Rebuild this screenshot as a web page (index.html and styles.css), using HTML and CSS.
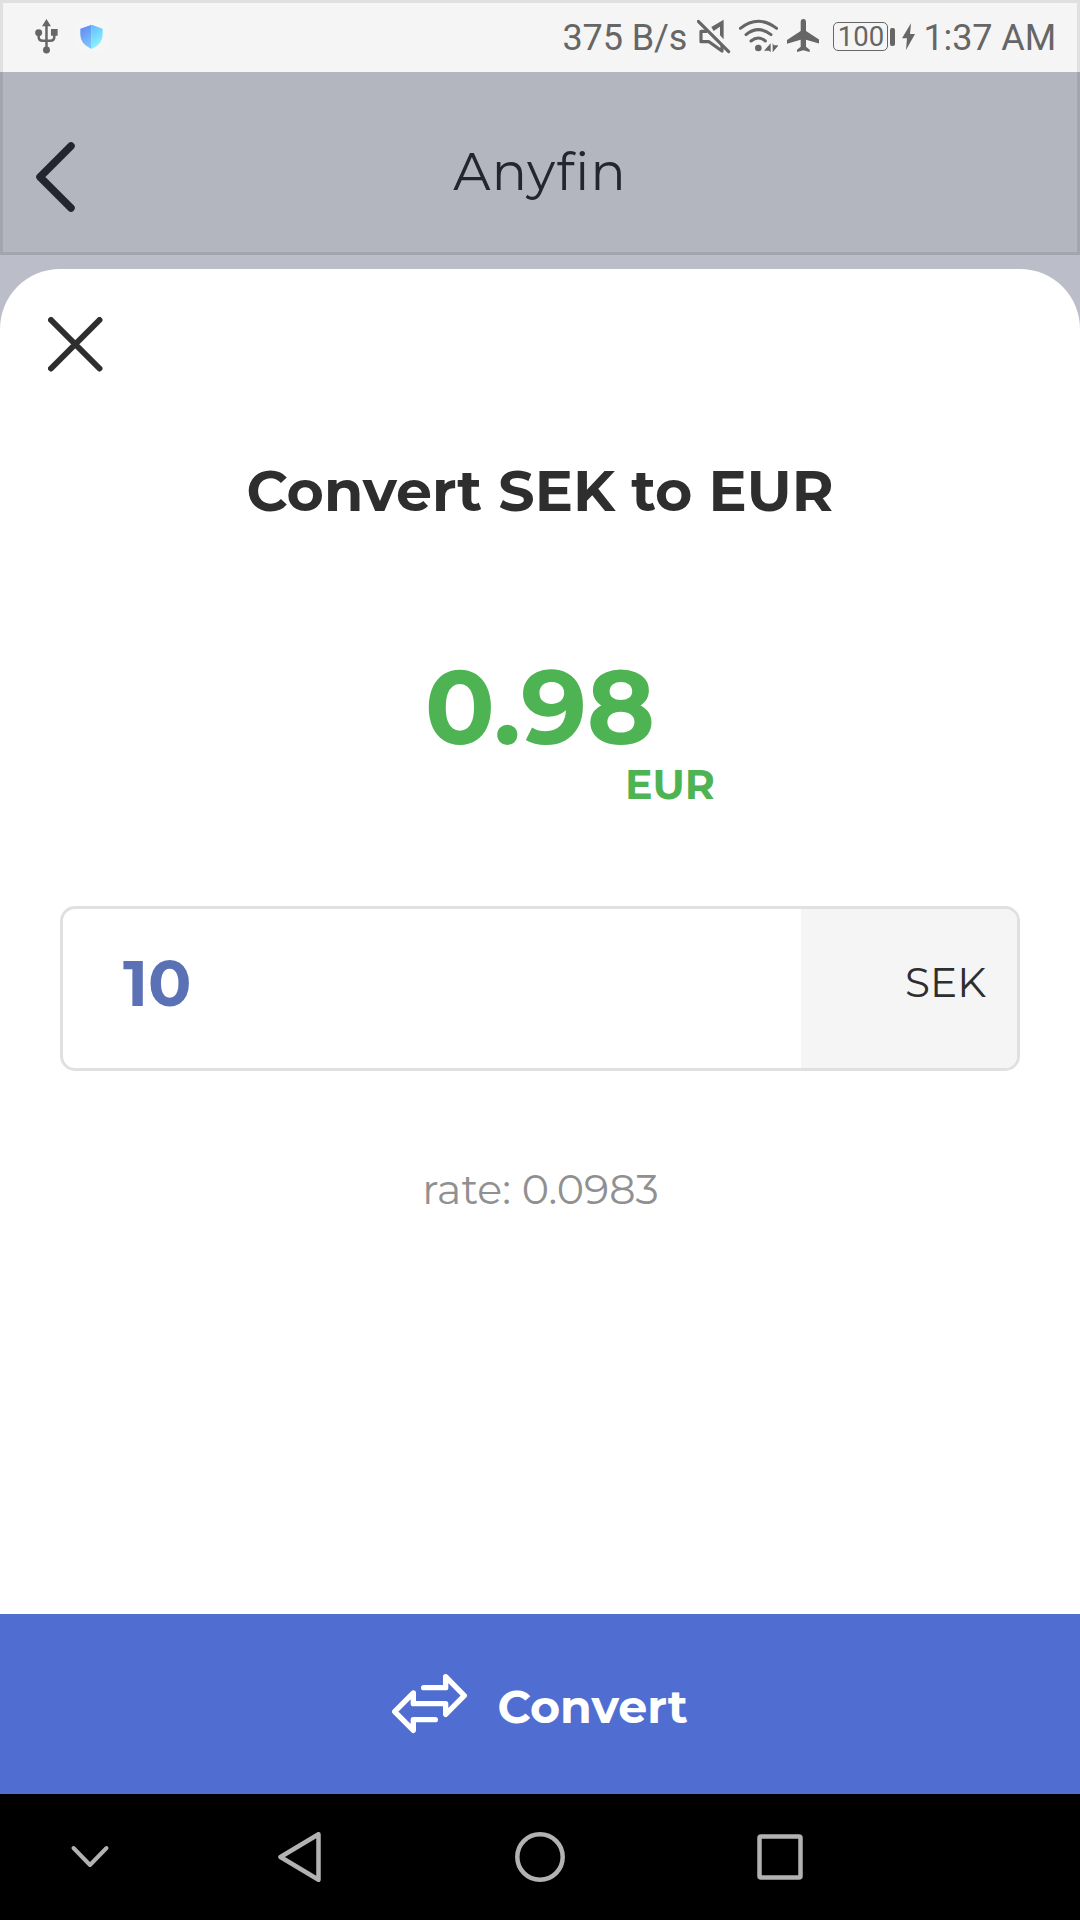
FILE: index.html
```html
<!DOCTYPE html>
<html lang="en">
<head>
<meta charset="utf-8">
<title>Anyfin</title>
<link rel="stylesheet" href="styles.css">
</head>
<body>
<div class="screen">
  <div class="status">
    <div class="status-left">
      <svg class="usb" viewBox="105 57 70 105">
        <path class="fill" d="M139.500 57L126 79H153ZM153 87H173V107H153Z"/>
        <circle class="fill" cx="116" cy="98" r="10.500"/>
        <circle class="fill" cx="139.500" cy="150" r="10.500"/>
        <path class="line" d="M139.500 76V146M116 98V110Q116 122 128 122H151Q163 122 163 110V100" stroke-width="7.500"/>
      </svg>
      <svg class="shield" viewBox="228 57 94 105">
        <defs>
          <linearGradient id="sl" x1="0" y1="0" x2="0.300" y2="1"><stop offset="0" stop-color="#5b84f4"/><stop offset="1" stop-color="#7cc3fb"/></linearGradient>
          <linearGradient id="sr" x1="0" y1="0" x2="0.300" y2="1"><stop offset="0" stop-color="#62b9fb"/><stop offset="1" stop-color="#8df6ff"/></linearGradient>
        </defs>
        <rect x="228" y="60" width="94" height="99" rx="24" fill="#f6f6f6"/>
        <path fill="url(#sl)" d="M275 74L241 86V104Q241 132 275 147Z"/>
        <path fill="url(#sr)" d="M275 74L308 86V104Q308 132 275 147Z"/>
      </svg>
    </div>
    <div class="status-right">
      <span class="status-text">375 B/s</span>
      <svg class="mute" viewBox="472 57 100 105">
        <path class="line" d="M476 64L567 155" stroke-width="9.500" stroke-linecap="round"/>
        <path class="fill" d="M515 81L552 59V118L541 106V80L522 93Z"/>
        <path class="line" d="M502 94H484V125H508L547 153V134" stroke-width="9.500"/>
      </svg>
      <svg class="wifi" viewBox="596 57 119 105">
        <path class="line" d="M600 85Q654 43 709 85M617 104Q654 74 692 104M632 123Q654 105 675 123" stroke-width="9" stroke-linecap="round"/>
        <circle class="fill" cx="654" cy="144" r="10"/>
        <path class="fill" d="M691 130V157L686 152H671ZM697 157V130L701 136H715Z"/>
      </svg>
      <svg class="plane" viewBox="740 57 98 105">
        <path class="fill" d="M789 57q-8 0-8 10V93L740 120V131L781 119V140L770 149V156L789 151L808 156V149L797 140V119L838 131V120L797 93V67q0-10-8-10z"/>
      </svg>
      <div class="battery"><span class="battery-level">100</span></div>
      <svg class="bolt" viewBox="276 57 39 105">
        <path class="fill" d="M303 70L276 115H291L288 150L315 102H300Z"/>
      </svg>
      <span class="status-text">1:37 AM</span>
    </div>
  </div>

  <header class="header">
    <svg class="back" viewBox="0 0 39 70"><path d="M35 4L4 35L35 66"/></svg>
    <h1 class="app-title">Anyfin</h1>
  </header>

  <div class="backdrop">
    <main class="sheet">
      <svg class="close" viewBox="0 0 55 55"><path d="M3 3L51.500 51.500M51.500 3L3 51.500"/></svg>
      <h2 class="title">Convert SEK to EUR</h2>
      <div class="amount">0.98</div>
      <div class="currency">EUR</div>
      <div class="field">
        <div class="value">10</div>
        <div class="unit">SEK</div>
      </div>
      <div class="rate">rate: 0.0983</div>
    </main>
  </div>

  <div class="convert">
    <svg class="swap" viewBox="66 102 226 178"><path d="M161 143H227V110L283 167L227 223V191H130V159L74 215L130 271V239H196"/></svg>
    <span>Convert</span>
  </div>

  <nav class="nav">
    <svg viewBox="0 0 50 50"><path d="M8.500 16L25 33L41.500 16" stroke-linecap="round" stroke-width="4"/></svg>
    <svg viewBox="0 0 50 50"><path d="M43.500 2.200L5.500 25L43.500 47.800Z" stroke-width="4.500"/></svg>
    <svg viewBox="0 0 50 50"><circle cx="25" cy="25" r="22.700" stroke-width="4.500"/></svg>
    <svg viewBox="0 0 50 50"><rect x="4.500" y="4.500" width="41" height="41" rx="1.500" stroke-width="4.500"/></svg>
  </nav>
</div>
</body>
</html>
```
FILE: styles.css
```css
* { box-sizing: border-box; }

body {
  margin: 0;
  font-family: "Montserrat", "Inter", sans-serif;
  color: #2e2e2e;
}

svg { display: block; flex: none; fill: none; stroke-linejoin: round; }

.screen {
  width: 1080px;
  height: 1920px;
  display: flex;
  flex-direction: column;
  overflow: hidden;
}

/* Status bar */
.status {
  height: 72px;
  flex: none;
  display: flex;
  justify-content: space-between;
  padding: 0 21px 0 32px;
  background: #f5f5f5;
  border: 3px solid #e0e0e0;
  border-bottom: 0;
  font-family: "Roboto", sans-serif;
  color: #666;
}
.status-left, .status-right { display: flex; align-items: flex-start; padding-top: 16px; }
.status-left svg, .status-right svg { height: 35px; }
.status-text { font-size: 36px; line-height: 36px; padding-top: 1px; letter-spacing: -0.100px; white-space: nowrap; }
.fill { fill: #666; }
.line { stroke: #666; }
.usb { width: 23.300px; margin-right: 17.700px; }
.shield { width: 31.300px; }
.mute { width: 33.300px; margin-left: 10px; }
.wifi { width: 39.700px; margin-left: 8px; }
.plane { width: 32.700px; margin-left: 8.500px; }
.bolt { width: 13px; margin: 0 8.500px 0 7px; }
.battery { display: flex; align-items: center; gap: 2px; margin: 3px 0 0 14px; height: 29px; }
.battery-level {
  width: 55px;
  height: 29px;
  border: 1.500px solid #666;
  border-radius: 5px;
  font-size: 27.500px;
  line-height: 27px;
  text-align: center;
}
.battery::after { content: ""; width: 4.500px; height: 18px; border-radius: 2px; background: #666; }

/* App header */
.header {
  height: 183px;
  flex: none;
  display: grid;
  grid-template-columns: 39px 1fr 39px;
  align-items: start;
  padding: 0 33px;
  background: #b3b6bf;
  border: 3px solid #a2a5ae;
  border-top: 0;
}
.back { width: 39px; height: 70px; margin-top: 69.500px; stroke: #23262f; stroke-width: 7.500; stroke-linecap: round; }
.app-title {
  margin: 68px 0 0;
  text-align: center;
  font-size: 52px;
  line-height: 64px;
  font-weight: 400;
  letter-spacing: 1.200px;
  color: #23262f;
}

/* Converter sheet */
.backdrop { flex: 1; padding-top: 14px; background: #bbbdc8; display: flex; }
.sheet {
  flex: 1;
  display: flex;
  flex-direction: column;
  padding: 47.500px 60px 0;
  background: #fff;
  border-radius: 60px 60px 0 0;
}
.close { width: 55px; height: 55px; margin-left: -12.500px; stroke: #2e2e2e; stroke-width: 6; stroke-linecap: round; }
.title { margin: 86.500px 0 0; text-align: center; font-size: 57px; line-height: 66px; font-weight: 700; }
.amount {
  margin-top: 123px;
  text-align: center;
  font-size: 103.500px;
  line-height: 120px;
  font-weight: 700;
  color: #4eb453;
}
.currency {
  margin: -8px 305px 0 0;
  text-align: right;
  font-size: 41px;
  line-height: 50px;
  font-weight: 700;
  color: #4eb453;
}
.field {
  height: 165px;
  margin-top: 97px;
  display: flex;
  border: 3px solid #e0e0e0;
  border-radius: 15px;
  overflow: hidden;
}
.value, .unit { line-height: 147px; }
.value { flex: 1; padding: 1px 0 0 60px; font-size: 64px; font-weight: 700; color: #5b71b5; }
.unit { width: 216px; padding-right: 31px; text-align: right; font-size: 40.600px; background: #f5f5f5; }
.rate { margin-top: 93px; padding-left: 1px; text-align: center; font-size: 41.200px; line-height: 50px; color: #909090; }

/* Action button */
.convert {
  height: 180px;
  flex: none;
  display: flex;
  align-items: center;
  justify-content: center;
  gap: 30px;
  background: #506ed2;
  color: #fff;
  font-size: 46px;
  line-height: 56px;
  font-weight: 700;
}
.convert span { padding-top: 6px; }
.swap { width: 75.300px; height: 59.300px; stroke: #fff; stroke-width: 16; stroke-linecap: round; }

/* System navigation */
.nav {
  height: 126px;
  flex: none;
  display: grid;
  grid-template-columns: 180px 240px 240px 240px;
  justify-items: center;
  align-items: center;
  background: #000;
}
.nav svg { width: 50px; height: 50px; stroke: #b2b2b2; }
```
